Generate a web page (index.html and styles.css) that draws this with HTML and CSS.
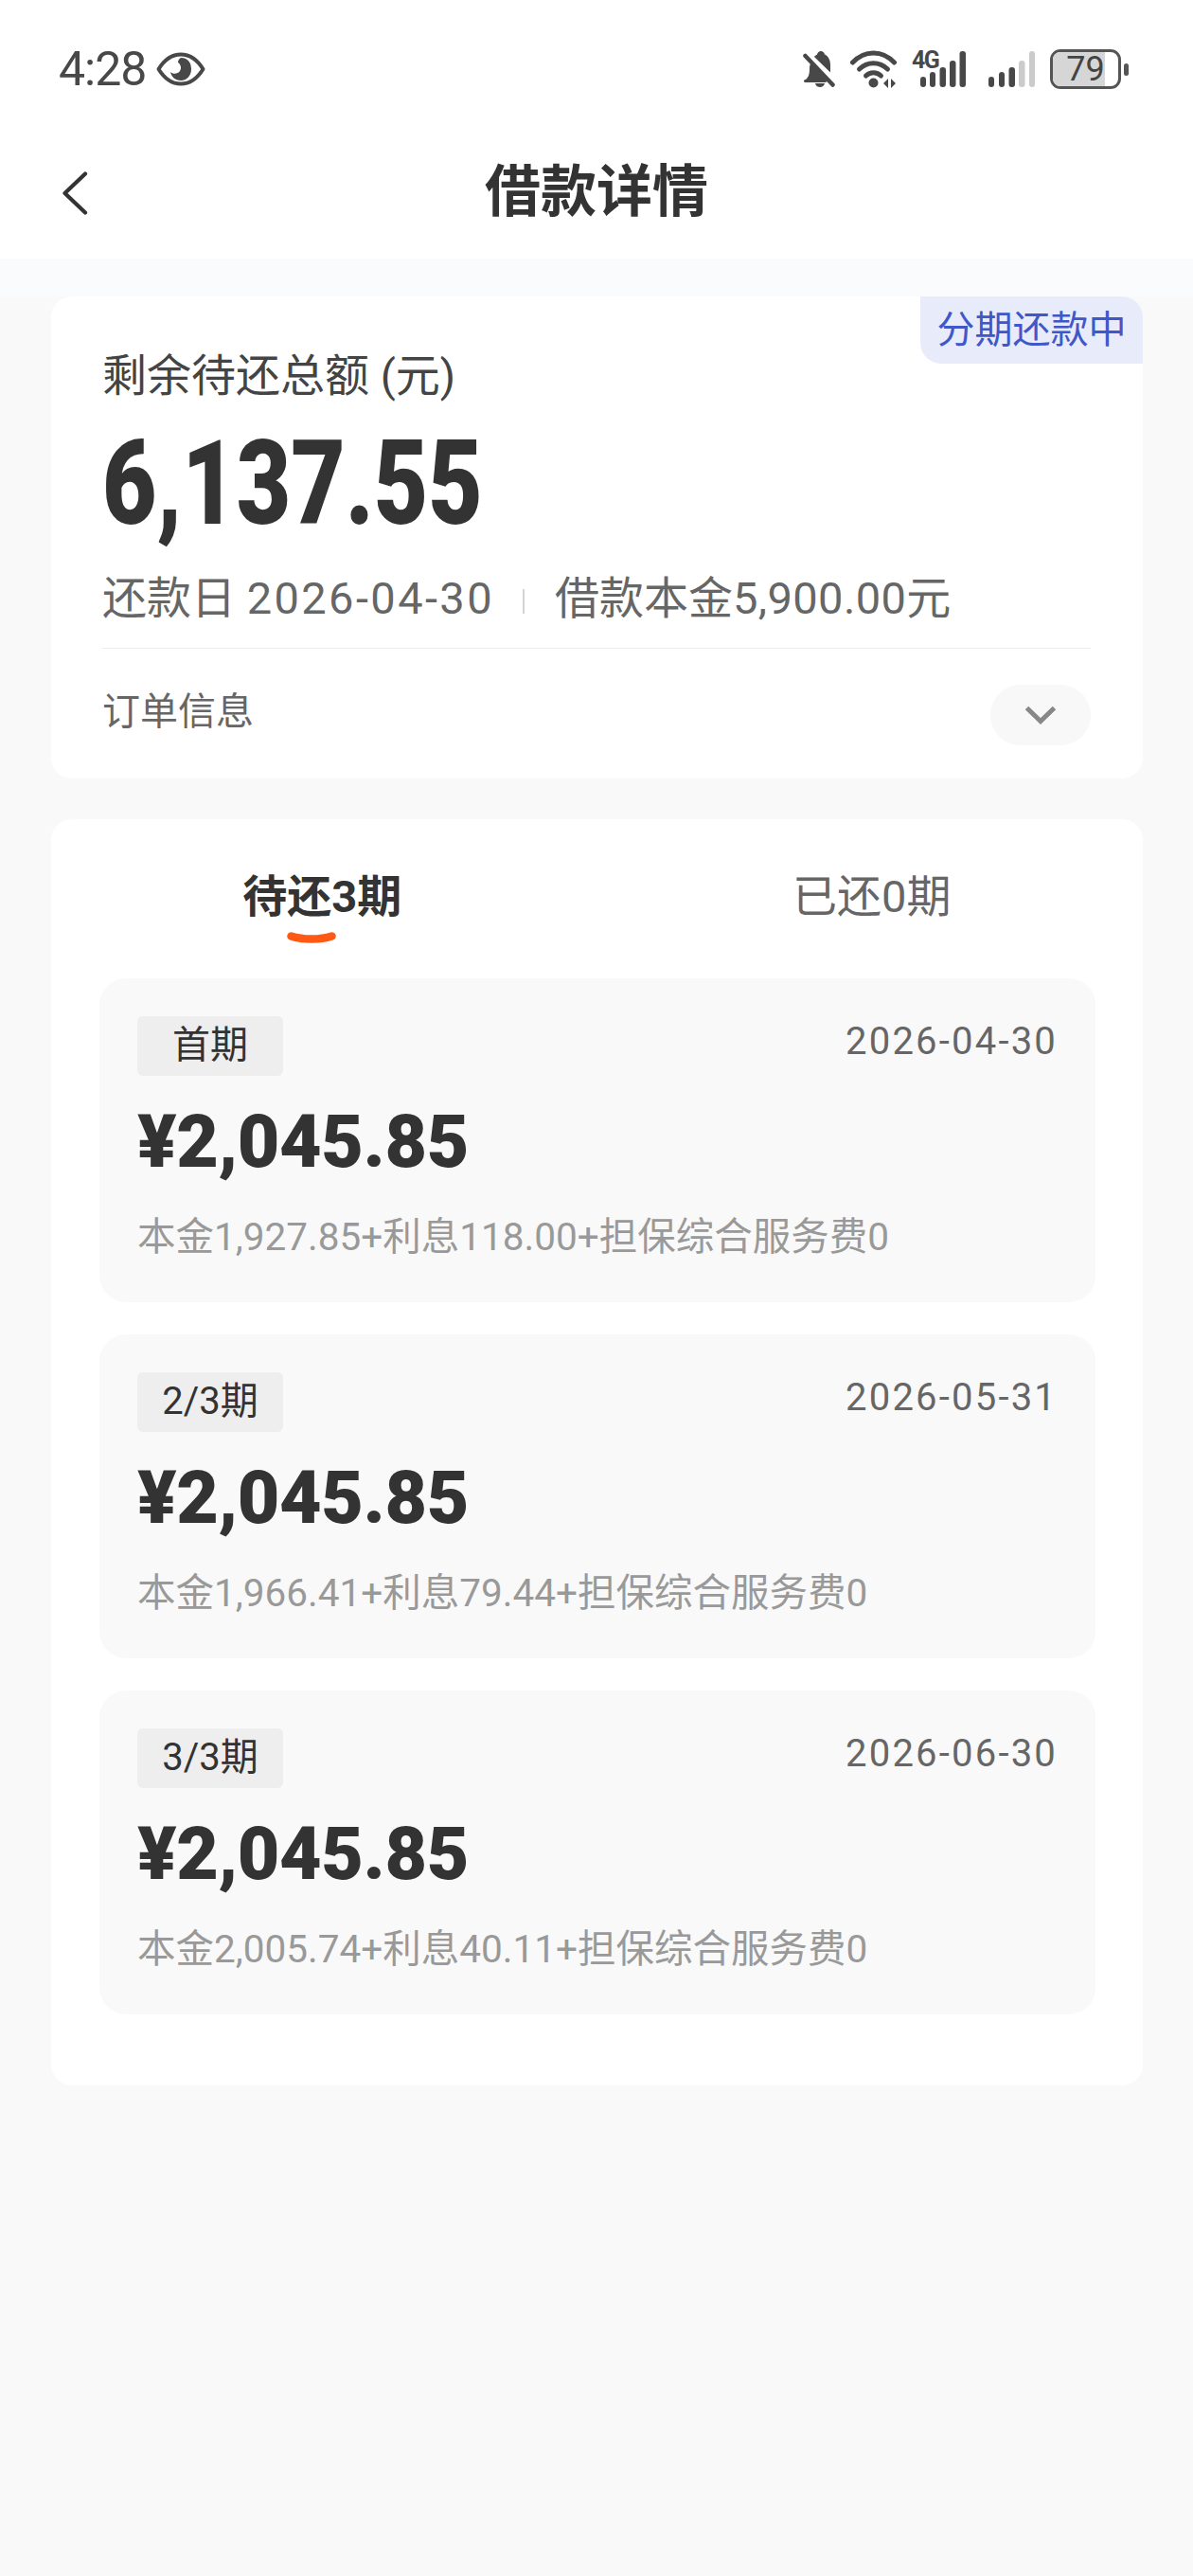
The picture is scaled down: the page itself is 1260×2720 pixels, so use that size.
FILE: index.html
```html
<!DOCTYPE html>
<html lang="zh-CN">
<head>
<meta charset="utf-8">
<title>借款详情</title>
<link rel="stylesheet" href="styles.css">
</head>
<body>
<header class="top">
  <div class="status">
    <div class="status-left">
      <span class="clock">4:28</span>
      <svg class="eye" viewBox="0 0 52 36"><path d="M2.500 18C9 7.500 17 2.500 26 2.500S43 7.500 49.500 18C43 28.500 35 33.500 26 33.500S9 28.500 2.500 18Z" fill="none" stroke="#484848" stroke-width="4" stroke-linejoin="round"/><path d="M26 6c8 0 11 6 11 12s-4 12-11 12c-6 0-10-4-11-9 3 3 8 2 10-1 2-3 1-7-2-9 0-2 1-4 3-5Z" fill="#484848"/></svg>
    </div>
    <div class="status-right">
      <svg class="bell" viewBox="0 0 34 38"><path d="M3 30c3-3 4-5 4-12 0-2 .5-4 1.500-5.500L26 30Z" fill="#484848"/><path d="M12 6c1-1.500 2-2 3-2.500C15.500 1.500 17 0 19 0s3.500 1.500 4 3.500c4 2 6 6 6 11.500v7.500Z" fill="#484848"/><rect x="1" y="30" width="24" height="3" rx="1.500" fill="#484848"/><path d="M13 34h10c-.5 2.500-2.500 4-5 4s-4.500-1.500-5-4Z" fill="#484848"/><path d="M2.500 5 31.500 35.500" stroke="#484848" stroke-width="4.500" stroke-linecap="round"/></svg>
      <svg class="wifi" viewBox="0 0 49 40"><g fill="none" stroke="#484848" stroke-width="5" stroke-linecap="round"><path d="M2.500 13C15 -.5 34 -.5 46.500 13"/><path d="M9.500 20C18 11.500 31 11.500 39.500 20"/><path d="M16.500 27C21 22.500 28 22.500 32.500 27"/></g><circle cx="24.500" cy="34.500" r="5" fill="#484848"/><path d="M35 35 40 30V40ZM43 30 48 35 43 40Z" fill="#484848"/></svg>
      <div class="signal-wrap">
        <span class="net">4G</span>
        <svg class="signal" viewBox="0 0 57 38"><g fill="#484848"><rect x="9" y="27" width="6" height="11" rx="3"/><rect x="19" y="22" width="6" height="16" rx="3"/><rect x="29.500" y="17" width="6.500" height="21" rx="3"/><rect x="40" y="10" width="6.500" height="28" rx="3"/><rect x="50.500" y="0" width="6.500" height="38" rx="3"/></g></svg>
      </div>
      <svg class="signal-two" viewBox="0 0 49 38"><g fill="#484848"><rect x="0" y="27" width="6" height="11" rx="3"/><rect x="11" y="22" width="6" height="16" rx="3"/><rect x="21.500" y="17" width="6.500" height="21" rx="3"/></g><g fill="#cbcbcb"><rect x="32" y="10" width="6.500" height="28" rx="3"/><rect x="43" y="0" width="6" height="38" rx="3"/></g></svg>
      <div class="battery">
        <div class="battery-body"><div class="battery-fill"></div><span class="battery-num">79</span></div>
        <div class="battery-nub"></div>
      </div>
    </div>
  </div>
  <nav class="nav">
    <svg class="back" viewBox="0 0 28 46"><path d="M25 2.500 3.500 23 25 43.500" fill="none" stroke="#333" stroke-width="4.200" stroke-linecap="round" stroke-linejoin="round"/></svg>
    <h1 class="title">借款详情</h1>
  </nav>
</header>
<div class="strip"></div>
<main class="main">
  <section class="card summary">
    <div class="state">分期还款中</div>
    <p class="sum-label">剩余待还总额 (元)</p>
    <p class="sum-value">6,137.55</p>
    <p class="sum-meta">还款日 <span class="meta-date">2026-04-30</span><i class="meta-sep"></i>借款本金<span class="meta-money">5,900.00</span>元</p>
    <div class="order">
      <span class="order-label">订单信息</span>
      <span class="order-toggle"><svg class="chev" viewBox="0 0 34 20"><path d="M2.500 2.500 17 16.500 31.500 2.500" fill="none" stroke="#888" stroke-width="5"/></svg></span>
    </div>
  </section>
  <section class="card plan">
    <div class="tabs">
      <div class="tab tab-on"><span class="tab-text">待还<span class="tab-num">3</span>期<svg class="smile" viewBox="0 0 52 14"><path d="M4.500 4.500C17 8.500 35 8.500 47.500 4.500" fill="none" stroke="#ff5a14" stroke-width="8.500" stroke-linecap="round"/></svg></span></div>
      <div class="tab tab-off">已还0期</div>
    </div>
    <article class="item">
      <div class="item-head"><span class="tag">首期</span><span class="date">2026-04-30</span></div>
      <div class="amount">¥2,045.85</div>
      <p class="detail">本金1,927.85+利息118.00+担保综合服务费0</p>
    </article>
    <article class="item">
      <div class="item-head"><span class="tag">2/3期</span><span class="date">2026-05-31</span></div>
      <div class="amount">¥2,045.85</div>
      <p class="detail">本金1,966.41+利息79.44+担保综合服务费0</p>
    </article>
    <article class="item">
      <div class="item-head"><span class="tag">3/3期</span><span class="date">2026-06-30</span></div>
      <div class="amount">¥2,045.85</div>
      <p class="detail">本金2,005.74+利息40.11+担保综合服务费0</p>
    </article>
  </section>
</main>
</body>
</html>
```
FILE: styles.css
```css
* { box-sizing: border-box; }
html, body { margin: 0; padding: 0; }
body {
  width: 1260px;
  min-height: 2720px;
  background: #f9f9f9;
  font-family: Roboto, "Noto Sans CJK SC", sans-serif;
  color: #333;
}
p, h1 { margin: 0; font-weight: 400; }
.top { background: #fff; height: 273px; }
.status {
  height: 146px;
  padding: 0 68px 0 62px;
  display: flex;
  justify-content: space-between;
  align-items: center;
}
.status-left { display: flex; align-items: center; gap: 11px; }
.clock { font-size: 50px; line-height: 50px; color: #484848; letter-spacing: -1px; font-weight: 400; }
.eye { width: 52px; height: 36px; display: block; }
.status-right { display: flex; align-items: center; }
.bell { width: 34px; height: 38px; display: block; margin-right: 16px; }
.wifi { width: 49px; height: 40px; display: block; margin-right: 16px; }
.signal-wrap { position: relative; width: 57px; height: 38px; margin-right: 24px; }
.signal { width: 57px; height: 38px; display: block; }
.net {
  position: absolute;
  left: 0;
  top: -3px;
  font-family: Roboto, sans-serif;
  font-weight: 700;
  font-size: 25px;
  line-height: 26px;
  letter-spacing: -1.500px;
  color: #484848;
}
.signal-two { width: 49px; height: 38px; display: block; margin-right: 16px; }
.battery { display: flex; align-items: center; gap: 3px; }
.battery-body {
  position: relative;
  width: 75px;
  height: 42px;
  border: 3px solid #555;
  border-radius: 11px;
  overflow: hidden;
  display: flex;
  align-items: center;
  justify-content: center;
}
.battery-fill { position: absolute; left: 0; top: 0; bottom: 0; width: 55px; background: #d6d6d6; }
.battery-num { position: relative; font-size: 36px; line-height: 36px; color: #444; font-weight: 400; }
.battery-nub { width: 5px; height: 13px; border-radius: 3px; background: #555; }
.nav {
  position: relative;
  height: 127px;
  display: flex;
  align-items: center;
  justify-content: center;
  padding-bottom: 14px;
}
.back { position: absolute; left: 65px; top: 35px; width: 28px; height: 46px; }
.title { font-size: 59px; line-height: 70px; font-weight: 700; color: #333; }
.strip { height: 40px; background: #fafbfd; }
.main { padding: 0 53px 0 54px; display: flex; flex-direction: column; gap: 43px; }
.card { background: #fff; border-radius: 22px; }
.summary { position: relative; height: 509px; padding: 54px 55px 0 54px; }
.state {
  position: absolute;
  right: 0;
  top: 0;
  width: 235px;
  height: 71px;
  background: #e8ebfa;
  border-radius: 0 22px 0 22px;
  color: #3f57c9;
  font-size: 40px;
  line-height: 71px;
  text-align: center;
}
.sum-label { font-size: 47px; line-height: 60px; color: #444; }
.sum-value {
  font-family: Roboto, sans-serif;
  font-weight: 900;
  font-size: 124px;
  line-height: 124px;
  margin-top: 22px;
  color: #333;
  transform: scaleX(.8);
  transform-origin: left center;
}
.sum-meta {
  font-size: 47px;
  line-height: 60px;
  color: #666;
  margin-top: 29px;
  display: flex;
  align-items: center;
  white-space: pre;
}
.meta-date { letter-spacing: 2.400px; }
.meta-money { letter-spacing: .4px; }
.meta-sep { width: 2px; height: 26px; background: #d4d4d4; margin: 6px 32px 0 30px; }
.order {
  margin-top: 22px;
  border-top: 1px solid #ececec;
  height: 140px;
  display: flex;
  align-items: center;
  justify-content: space-between;
}
.order-label { font-size: 40px; line-height: 50px; color: #666; margin-bottom: 6px; }
.order-toggle {
  width: 106px;
  height: 64px;
  border-radius: 32px;
  background: #f8f8f8;
  display: flex;
  align-items: center;
  justify-content: center;
}
.chev { width: 34px; height: 20px; display: block; }
.plan { height: 1337px; padding: 0 50px 0 51px; }
.tabs { display: flex; height: 168px; margin: 0 -50px 0 -51px; }
.tab {
  flex: 1;
  font-size: 47px;
  line-height: 60px;
  color: #666;
  text-align: center;
  padding-top: 52px;
}
.tab-on { font-weight: 700; color: #333; padding-right: 4px; }
.tab-off { padding-left: 4px; }
.tab-text { position: relative; display: inline-block; }
.smile { position: absolute; left: 47px; top: 67px; width: 52px; height: 14px; display: block; }
.item {
  height: 342px;
  background: #f9f9f9;
  border-radius: 28px;
  padding: 40px 40px 0 40px;
  margin-bottom: 34px;
}
.item-head { display: flex; justify-content: space-between; align-items: flex-start; }
.tag {
  width: 154px;
  height: 63px;
  background: #eee;
  border-radius: 6px;
  font-size: 40px;
  line-height: 61px;
  text-align: center;
  color: #333;
}
.date { font-size: 40px; line-height: 54px; color: #666; letter-spacing: 2.200px; }
.amount { font-size: 77px; line-height: 90px; font-weight: 900; color: #333; margin-top: 25px; letter-spacing: -.4px; }
.detail { font-size: 40.500px; line-height: 50px; color: #999; margin-top: 30px; }
```
